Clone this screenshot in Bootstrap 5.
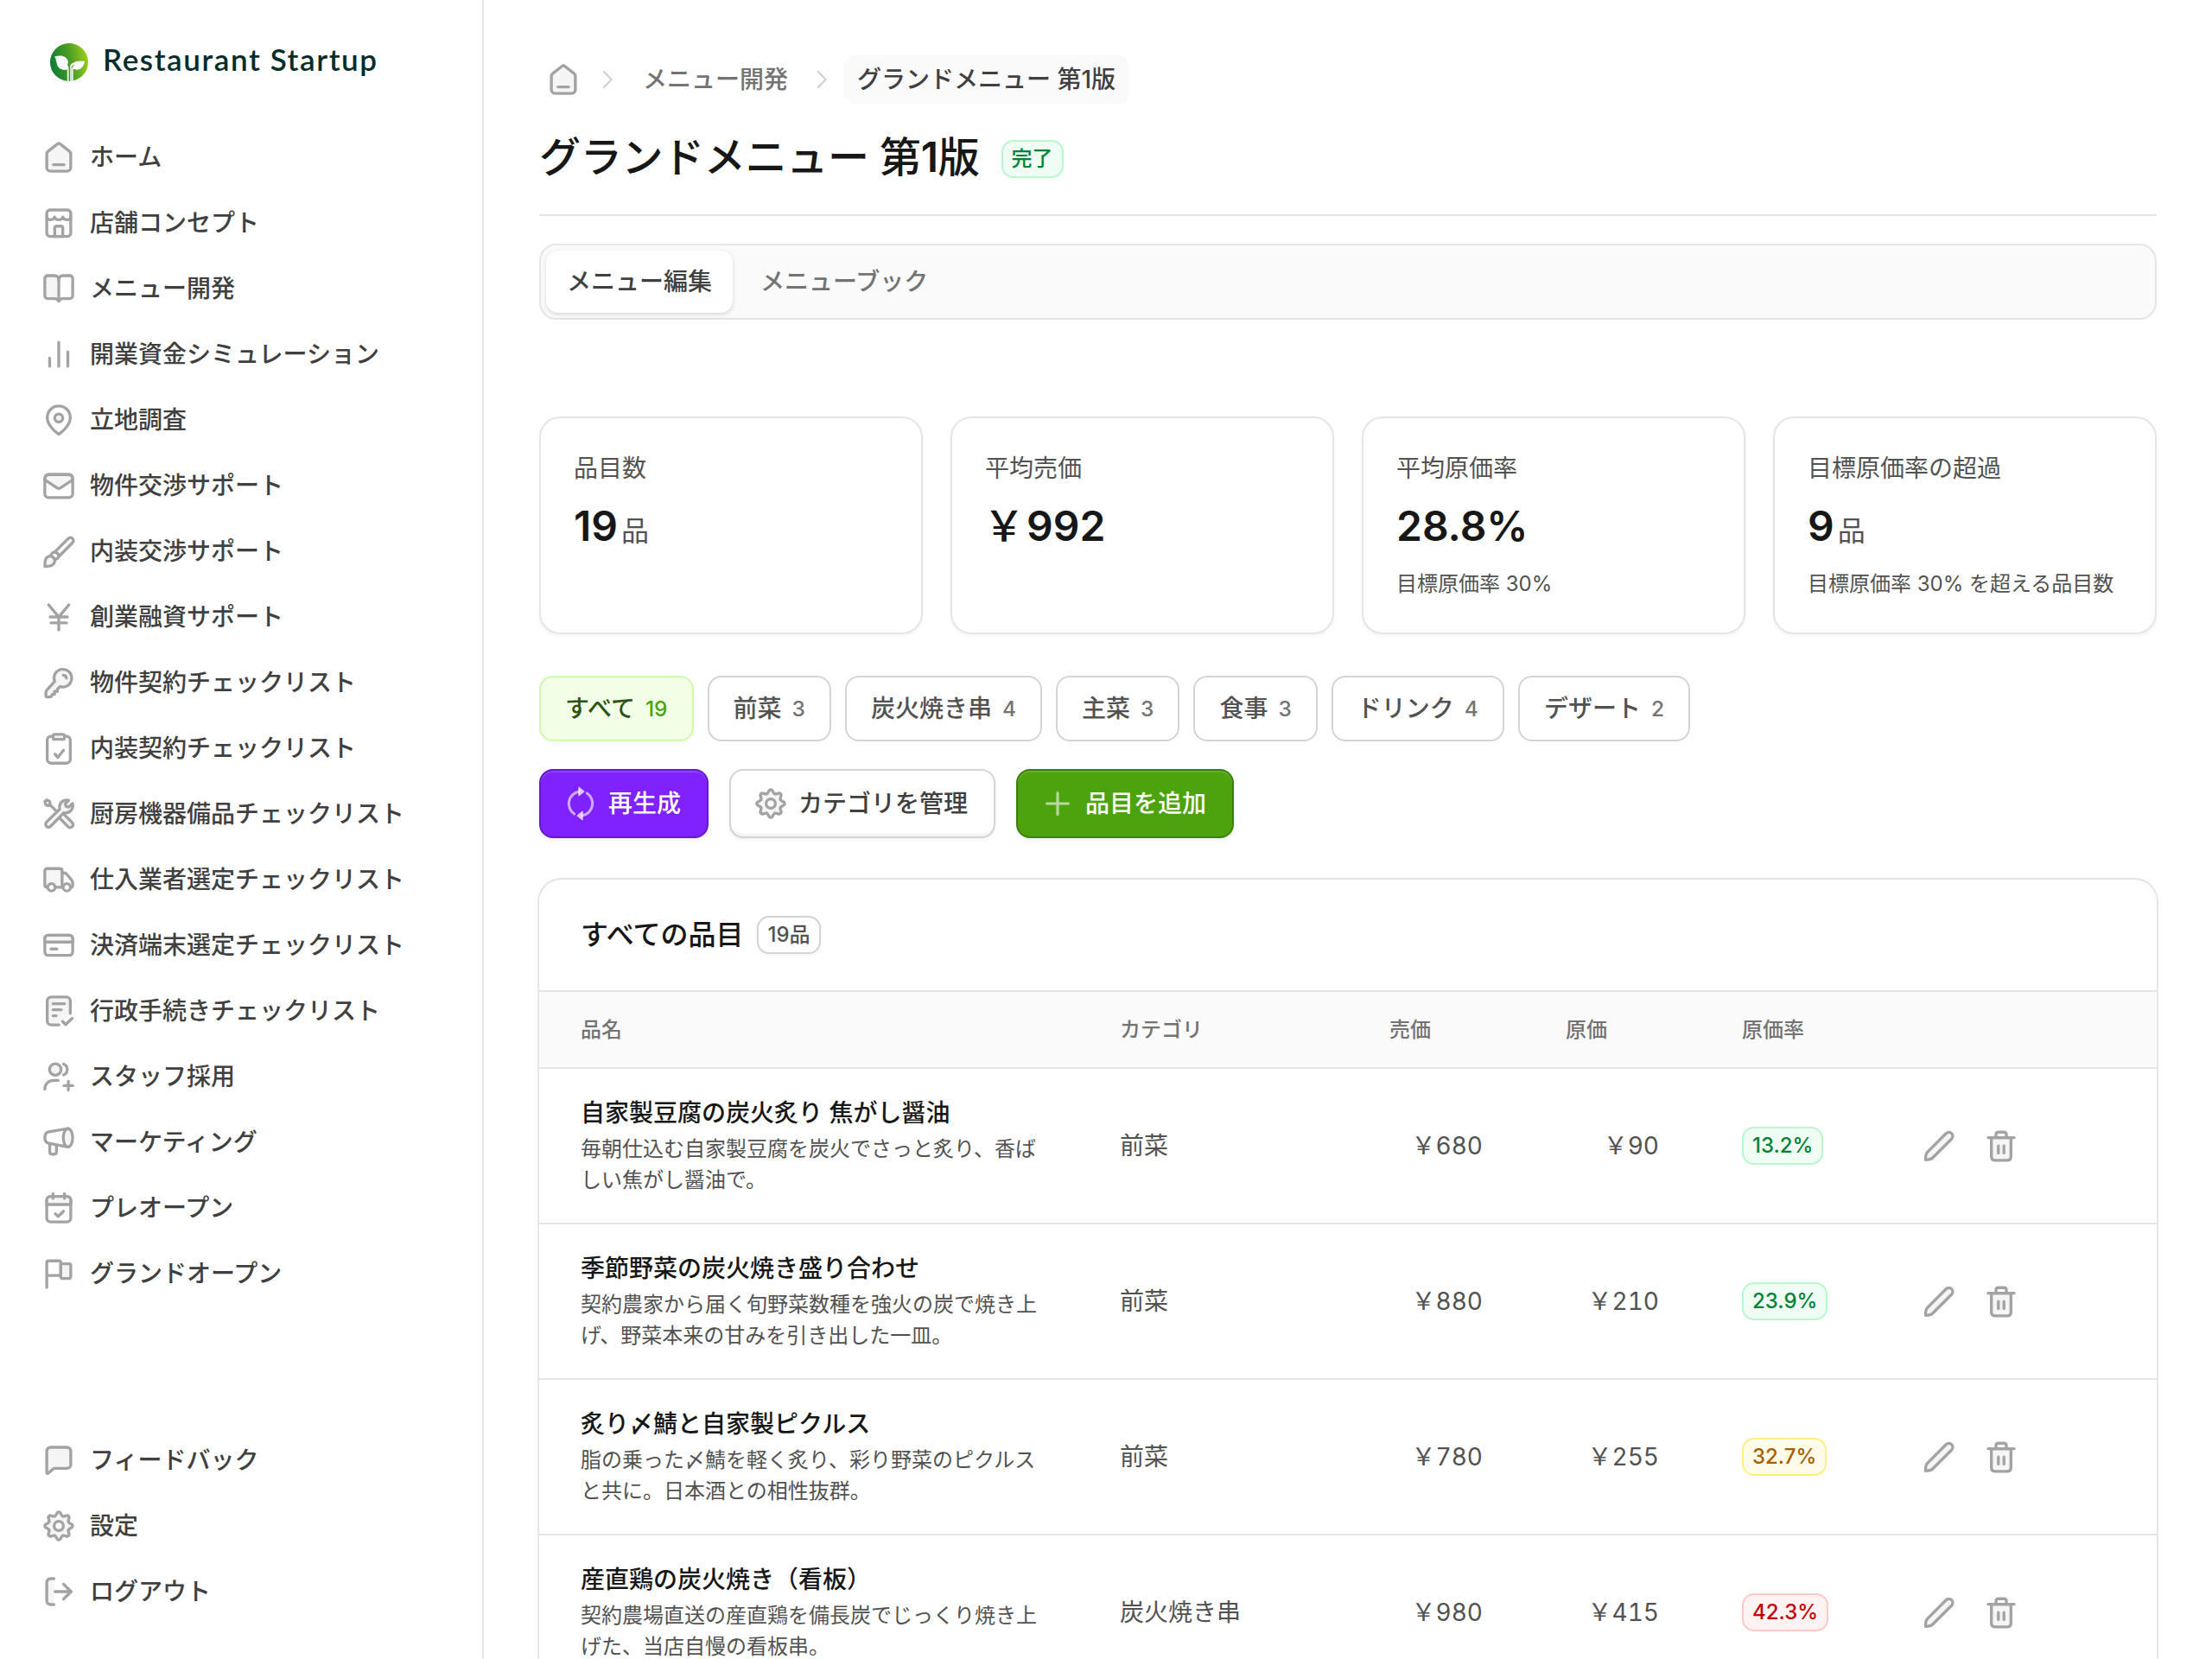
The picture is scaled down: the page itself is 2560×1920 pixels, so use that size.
<!DOCTYPE html>
<html lang="ja">
<head>
<meta charset="utf-8">
<meta name="viewport" content="width=device-width, initial-scale=1">
<title>グランドメニュー 第1版 | Restaurant Startup</title>
<link href="https://cdn.jsdelivr.net/npm/bootstrap@5.3.0/dist/css/bootstrap.min.css" rel="stylesheet">
<style>
:root{--n50:#fafafa;--n200:#e5e5e5;--n300:#d4d4d4;--n400:#a3a3a3;--n500:#737373;--n600:#525252;--n700:#404040;--n900:#171717}
body{font-family:Inter,"Noto Sans CJK JP",sans-serif;font-size:28px;line-height:40px;color:var(--n700);background:#fff;overflow:hidden}
.app{height:1920px;width:2560px}
.ico{width:40px;height:40px;flex:none;display:block;color:var(--n400);--tint:#f5f5f5;fill:none;stroke:currentColor;stroke-width:1.5;stroke-linecap:round;stroke-linejoin:round}
.side{width:560px;border-right:2px solid var(--n200);padding:38px 32px 40px}
.brand{padding-left:26px;gap:17px;height:68px;margin-bottom:38px}
.brand-name{font-family:Lato,"Noto Sans",sans-serif;font-weight:600;font-size:35px;line-height:40px;letter-spacing:1.6px;color:#032d2b;margin-bottom:8px;white-space:nowrap}
.side .nav-link{height:76px;padding:0 16px;gap:16px;color:var(--n700);font-weight:500;white-space:nowrap}
.main-pane{padding:56px 62px 0;min-width:0}
.inner{padding:0 2px}
.crumbs{height:72px}
.crumbs .sep{width:20px;height:28px;margin:0 14px;color:var(--n300)}
.crumb{padding:8px 16px;font-weight:500;color:var(--n500);border-radius:14px;white-space:nowrap}
.crumb.here{background:var(--n50);color:var(--n700)}
.page-title{font-size:48px;line-height:64px;font-weight:500;color:var(--n900);margin:0;letter-spacing:-.3px}
.semi{font-weight:600}
.title-row{height:122px;padding-bottom:12px;gap:25px;border-bottom:2px solid var(--n200)}
.title-row .pill{margin-top:3px}
.pill{display:inline-flex;align-items:center;height:44px;padding:0 10px;border:2px solid;border-radius:14px;font-size:24px;line-height:32px;font-weight:500;white-space:nowrap}
.pill-green{color:#008236;background:#f0fdf4;border-color:#b9f8cf}
.pill-yellow{color:#a65f00;background:#fefce8;border-color:#fff085}
.pill-red{color:#c10007;background:#fef2f2;border-color:#ffc9c9}
.pill-plain{color:var(--n600);background:#fff;border-color:var(--n300);box-shadow:0 2px 4px rgba(0,0,0,.05)}
.tabs{margin-top:32px;height:88px;border:2px solid var(--n200);border-radius:20px;background:var(--n50);padding:6px;gap:8px}
.tabs .nav-link{height:72px;padding:0 24px;border-radius:14px;color:var(--n500);font-weight:500;display:flex;align-items:center}
.tabs .nav-link.active{background:#fff;color:var(--n700);box-shadow:0 2px 6px rgba(0,0,0,.1),0 2px 4px -2px rgba(0,0,0,.1)}
.stats{margin-top:112px;gap:32px}
.stat{flex:1 1 0;height:252px;border:2px solid var(--n200);border-radius:24px;padding:38px;box-shadow:0 2px 4px rgba(0,0,0,.05);color:var(--n600)}
.stat-val{font-size:48px;line-height:64px;height:64px;font-weight:600;color:var(--n900);margin-top:15px}
.stat-val .unit{font-size:32px;line-height:40px;font-weight:400;color:var(--n600);margin-left:4px}
.stat-val .cur{font-weight:500;margin-left:-2px;margin-right:2px}
.stat-hint{font-size:24px;line-height:32px;margin-top:19px;white-space:nowrap}
.chips{margin-top:48px;gap:16px}
.chip{height:76px;padding:0 28px;border:2px solid var(--n300);border-radius:16px;background:#fff;color:var(--n600);font-size:28px;font-weight:500;gap:12px;display:flex;align-items:center;white-space:nowrap}
.chip span{font-size:24.5px;color:var(--n500)}
.chip.on{background:#f3fee7;border-color:#d0f8ab;color:#2b5314}
.chip.on span{color:#4ca30d}
.actions{margin-top:32px;gap:24px}
.act{height:80px;border:2px solid var(--n300);border-radius:16px;padding:0 30px 0 26px;gap:12px;display:flex;align-items:center;font-size:28px;line-height:40px;font-weight:500;white-space:nowrap;background:#fff;color:var(--n700);box-shadow:0 2px 4px rgba(0,0,0,.06),inset 0 -4px 0 -1px #f3f3f3}
.act-violet{background:#7f22fe;border-color:#6519cd;color:#fff;box-shadow:0 2px 4px rgba(0,0,0,.08),inset 0 2px 0 rgba(255,255,255,.14)}
.act-green{background:#4ca30d;border-color:#3b810a;color:#fff;box-shadow:0 2px 4px rgba(0,0,0,.08),inset 0 2px 0 rgba(255,255,255,.14)}
.act-violet .ico,.act-green .ico{color:rgba(255,255,255,.6)}
.panel{margin-top:46px;border:2px solid var(--n200);border-radius:28px 28px 0 0;overflow:hidden}
.panel-head{height:130px;padding:0 48px;gap:16px;border-bottom:2px solid var(--n200)}
.panel-head h2{font-size:32px;line-height:48px;font-weight:500;color:var(--n900);margin:0}
.items{table-layout:fixed;width:1872px;margin:0;--bs-table-bg:transparent}
.items th{height:88px;padding:0 24px;background:var(--n50);font-size:24px;line-height:32px;font-weight:500;color:var(--n500);border-bottom:2px solid var(--n200);vertical-align:middle}
.items td{height:180px;padding:0 24px;border-bottom:2px solid var(--n200);color:var(--n600);vertical-align:middle}
.items th:first-child,.items td:first-child{padding-left:48px}
.dish{font-weight:500;color:var(--n900);line-height:40px;margin-bottom:4px;white-space:nowrap}
.desc{font-size:24px;line-height:36px;width:536px}
.yen{width:108px;text-align:right;font-variant-numeric:tabular-nums;white-space:nowrap}
.rowacts{gap:32px}
</style>
</head>
<body>
<svg width="0" height="0" class="position-absolute" aria-hidden="true">
<defs>
<linearGradient id="leafgrad" x1="0" y1=".6" x2="1" y2=".4"><stop offset="0" stop-color="#0c7a35"/><stop offset=".55" stop-color="#4c9f24"/><stop offset="1" stop-color="#9fce1c"/></linearGradient>
<g id="tooth"><path d="M-2.1-5.08C-.9-5.58-1.3-7.25 0-7.25S.9-5.58 2.1-5.08"/></g>
</defs>
<symbol id="i-home" viewBox="0 0 18 18"><path fill="var(--tint)" d="M2.75 7.4c0-.65.3-1.2.8-1.6L8.4 2a1 1 0 0 1 1.2 0l4.85 3.8c.5.4.8.95.8 1.6v6.85a2 2 0 0 1-2 2h-8.5a2 2 0 0 1-2-2z"/><path d="M6.25 12.9h5.5"/></symbol>
<symbol id="i-store" viewBox="0 0 18 18"><rect x="2.75" y="2.25" width="12.5" height="13.75" rx="1.75"/><path d="M2.75 6.2c.2.8.85 1.2 1.7 1.2 1.2 0 2.2-.5 2.4-1.5.2 1 1.1 1.5 2.15 1.5s1.95-.5 2.15-1.5c.2 1 1.2 1.5 2.4 1.5.85 0 1.5-.4 1.7-1.2"/><path fill="var(--tint)" d="M6.9 16v-4.3a1 1 0 0 1 1-1h2.2a1 1 0 0 1 1 1V16z"/></symbol>
<symbol id="i-book" viewBox="0 0 18 18"><path fill="var(--tint)" d="M9 4.25c0-1.1-1-2-2.25-2h-3.5a1.5 1.5 0 0 0-1.5 1.5v9a1.5 1.5 0 0 0 1.5 1.5H7c.9 0 1.6.4 2 1.25z"/><path d="M9 4.25c0-1.1 1-2 2.25-2h3.5a1.5 1.5 0 0 1 1.5 1.5v9a1.5 1.5 0 0 1-1.5 1.5H11c-.9 0-1.6.4-2 1.25"/></symbol>
<symbol id="i-bars" viewBox="0 0 18 18"><path d="M4.25 11v4.25M9 2.75v12.5M13.75 7.75v7.5"/></symbol>
<symbol id="i-pin" viewBox="0 0 18 18"><path d="M9 16.5C7.6 15.5 3 11.8 3 7.75a6 6 0 0 1 12 0c0 4.05-4.6 7.75-6 8.75z"/><circle cx="9" cy="8" r="2.1" fill="var(--tint)"/></symbol>
<symbol id="i-mail" viewBox="0 0 18 18"><path fill="var(--tint)" d="M1.75 6c0-1.7.5-2.75 2-2.75h10.5c1.5 0 2 1.05 2 2.75L9.9 10.2a2 2 0 0 1-1.8 0z"/><rect x="1.75" y="3.25" width="14.5" height="12" rx="2"/></symbol>
<symbol id="i-brush" viewBox="0 0 18 18"><path fill="var(--tint)" d="M1.75 16.9c.1-1.6-.1-3.3.9-4.5a2.4 2.4 0 0 1 3.7 3.1c-1.2 1.5-3 1.3-4.6 1.4z"/><path d="M4.9 11.5c.2-1.2.9-2 2-2.1 1.3.4 2.1 1.2 2.1 2.2-.3 1-1.100 1.600-2.100 1.700"/><path d="M6.900 9.400 13.900 2.400a1.500 1.500 0 0 1 2.300 2.100L9.200 11.600"/></symbol>
<symbol id="i-yen" viewBox="0 0 18 18"><path d="M3.75 2.75 9 9l5.25-6.25M9 9v6.75M4.5 9h9M5 12.1h8"/></symbol>
<symbol id="i-key" viewBox="0 0 18 18"><path fill="var(--tint)" d="M6.85 8.35a4.6 4.6 0 1 1 2.9 2.7L8.3 12.4v1.2H6.8v1.5H5.6l-.4 1c-.1.3-.4.4-.7.4H3.1a.8.8 0 0 1-.8-.8v-1.600c0-.5.200-.9.500-1.200z"/><path d="M11.400 5.100c.8.100 1.500.7 1.600 1.600"/></symbol>
<symbol id="i-clip" viewBox="0 0 18 18"><rect x="3" y="2.75" width="12" height="14" rx="2"/><rect x="6" y="1.75" width="6" height="2.6" rx="1" fill="var(--tint)"/><path d="m7 12 1.500 1.750L11.500 10"/></symbol>
<symbol id="i-tools" viewBox="0 0 18 18"><path d="M1.75 2.5 2.7 1.75l1.5.6.3 1.5-1 .9-1.200-.5zM4.300 4.100 7.600 7.400"/><path fill="var(--tint)" d="m9.300 11 4.500 4.600a1.500 1.500 0 0 0 2.200-2.100l-4.200-4.200"/><path fill="var(--tint)" d="M14.200 1.900c-2.500-.7-5 1.100-4.800 3.900l.1.700-6.900 6.700a1.500 1.500 0 0 0 2.200 2.200l6.800-7c3 .6 5.300-1.900 4.600-4.900l-2 1.900-1.400-.3-.4-1.400z"/></symbol>
<symbol id="i-truck" viewBox="0 0 18 18"><path fill="var(--tint)" d="M3 13c-.8 0-1.25-.5-1.25-1.25V4.5c0-.8.45-1.25 1.25-1.25h6.5c.8 0 1.25.45 1.25 1.25V13z"/><path d="M10.75 5.5h.9c.6 0 1.100.2 1.500.7l2.600 3.100c.3.400.5.800.5 1.300v1.600c0 .5-.3.800-.8.800H10.750"/><circle cx="5.200" cy="13" r="1.900" fill="#fff"/><circle cx="13.200" cy="13" r="1.900" fill="#fff"/></symbol>
<symbol id="i-card" viewBox="0 0 18 18"><rect x="1.75" y="3.75" width="14.5" height="10.5" rx="1.75"/><path fill="var(--tint)" d="M1.75 7.3h14.5V5.5c0-1-.75-1.75-1.75-1.75h-11c-1 0-1.75.75-1.75 1.75z"/><path d="M5 10.9h3"/></symbol>
<symbol id="i-doc" viewBox="0 0 18 18"><path stroke="none" fill="var(--tint)" d="M3 2h12v9l-5 5H3z"/><path d="M9.1 16.25H5a2 2 0 0 1-2-2V3.75a2 2 0 0 1 2-2h8a2 2 0 0 1 2 2v6.5M6 5.25h6M6 8.4h4.3M6 11.5h1.7M11 14.5l1.6 1.6 3.4-3.3"/></symbol>
<symbol id="i-users" viewBox="0 0 18 18"><circle cx="7.2" cy="5.3" r="3" fill="var(--tint)"/><path d="M11.5 2.5a3 3 0 0 1 0 5.6M1.75 15.500c0-2.800 2-4.500 4.800-4.500h2.200M14 11.400v4.600M11.700 13.700h4.600"/></symbol>
<symbol id="i-horn" viewBox="0 0 18 18"><path d="M4.3 9.9V14c0 .8.4 1.2 1.100 1.200h1.300c.8 0 1.100-.4 1.100-1.200v-3.500"/><path d="M13.700 1.900 3.900 3.500C2.500 3.700 1.750 4.900 1.750 6.500s.75 2.800 2.150 3l9.800 1.900"/><ellipse cx="13.800" cy="6.650" rx="2.450" ry="4.750" fill="var(--tint)"/></symbol>
<symbol id="i-cal" viewBox="0 0 18 18"><rect x="2.75" y="3" width="12.5" height="13.25" rx="2"/><path fill="var(--tint)" d="M2.75 7.2h12.5V5c0-1.200-.8-2-2-2h-8.500c-1.200 0-2 .8-2 2zM6 1.500V4M12 1.500V4"/><path d="m7.200 12 1.500 1.400 2.800-2.700"/></symbol>
<symbol id="i-flag" viewBox="0 0 18 18"><path d="M2.75 16.25V3.25c0-.6.3-.9.9-.9h5.500c.6 0 .9.300.9.900v6.700H2.750"/><path fill="var(--tint)" d="M10.050 3.900h4.300c.6 0 .9.300.9.900v5.800c0 .6-.3.900-.9.900h-3.400c-.6 0-.9-.3-.9-.9z"/></symbol>
<symbol id="i-chat" viewBox="0 0 18 18"><path fill="var(--tint)" d="M2.75 4.25a2 2 0 0 1 2-2h8.5a2 2 0 0 1 2 2v7a2 2 0 0 1-2 2H6.4l-2.900 2.500c-.4.300-.75.100-.75-.4z"/></symbol>
<symbol id="i-gear" viewBox="0 0 18 18"><g transform="translate(9 9)"><circle r="5.7" fill="var(--tint)" stroke="none"/><g fill="var(--tint)"><use href="#tooth"/><use href="#tooth" transform="rotate(45)"/><use href="#tooth" transform="rotate(90)"/><use href="#tooth" transform="rotate(135)"/><use href="#tooth" transform="rotate(180)"/><use href="#tooth" transform="rotate(225)"/><use href="#tooth" transform="rotate(270)"/><use href="#tooth" transform="rotate(315)"/></g><circle r="2.4" fill="#fff"/></g></symbol>
<symbol id="i-out" viewBox="0 0 18 18"><path stroke="none" fill="var(--tint)" d="M2.75 2.25H6.5v13.5H2.75z"/><path d="M6.5 15.75H4.75a2 2 0 0 1-2-2V4.25a2 2 0 0 1 2-2H6.5M7 9h8.5M11.500 5.100 15.400 9l-3.900 3.900"/></symbol>
<symbol id="i-sync" viewBox="0 0 18 18"><path stroke-width="1.4" d="M8.500 2.700a6.400 6.400 0 0 0-2.800 11.700M9.500 15.300a6.400 6.400 0 0 0 2.800-11.700"/><path fill="currentColor" stroke-width=".8" d="M8.100.7v4L10.600 2.700zM9.900 13.300v4L7.400 15.300z"/></symbol>
<symbol id="i-plus" viewBox="0 0 18 18"><path stroke-width="1.4" d="M9 3.400v11.200M3.400 9h11.200"/></symbol>
<symbol id="i-chev" viewBox="0 0 10 14"><path stroke-width="1.25" d="M2.500 2.500 6.800 7l-4.300 4.500"/></symbol>
<symbol id="i-pencil" viewBox="0 0 18 18"><path fill="var(--tint)" d="M2 16.300c0-1.500.100-3.100.9-3.900L12.700 2.600a1.900 1.900 0 0 1 2.900 2.800L5.700 15.300c-.9.900-2.200 1-3.700 1z"/></symbol>
<symbol id="i-trash" viewBox="0 0 18 18"><path fill="var(--tint)" d="M3.900 4.800h10.200v9.700c0 1.300-.7 2.100-2 2.100H5.900c-1.300 0-2-.8-2-2.100z"/><path d="M2.250 4.800h13.500M6.300 4.800V3.200c0-.8.500-1.300 1.300-1.300h2.800c.8 0 1.300.5 1.300 1.300v1.600M7.550 9.100v3.700M10.450 9.100v3.700"/></symbol>
</svg>

<div class="app d-flex overflow-hidden">
  <aside class="side d-flex flex-column flex-shrink-0">
    <a class="brand d-flex align-items-center text-decoration-none" href="#">
      <svg width="44" height="44" viewBox="0 0 44 44"><circle cx="22" cy="22" r="22" fill="url(#leafgrad)"/><path fill="#fff" d="M5 15.500c5-1.500 9-1.300 12 .4 3.500 2 4.200 5 3.600 8.600l-1.800-1.800c1 1.800 2.500 3.500 2.700 6V44h-1.700V30.500c-4.800 1.200-8.800-.3-11-4C7.200 23.700 7.500 18 5 15.500zM40 21c-1.200 5.500-3.600 8.900-7.500 9.600-2.500.4-4.300 0-5.800-1V44h-1.500V29c.6-2 2-3.400 4.200-4.600-2.200.4-3.600 1.500-4.700 2.800V44h-1.500V26c2-4 7.500-6 16.800-5z"/></svg>
      <span class="brand-name">Restaurant Startup</span>
    </a>
    <nav class="nav flex-column flex-nowrap">
      <a class="nav-link d-flex align-items-center" href="#"><svg class="ico"><use href="#i-home"/></svg>ホーム</a>
      <a class="nav-link d-flex align-items-center" href="#"><svg class="ico"><use href="#i-store"/></svg>店舗コンセプト</a>
      <a class="nav-link d-flex align-items-center" href="#"><svg class="ico"><use href="#i-book"/></svg>メニュー開発</a>
      <a class="nav-link d-flex align-items-center" href="#"><svg class="ico"><use href="#i-bars"/></svg>開業資金シミュレーション</a>
      <a class="nav-link d-flex align-items-center" href="#"><svg class="ico"><use href="#i-pin"/></svg>立地調査</a>
      <a class="nav-link d-flex align-items-center" href="#"><svg class="ico"><use href="#i-mail"/></svg>物件交渉サポート</a>
      <a class="nav-link d-flex align-items-center" href="#"><svg class="ico"><use href="#i-brush"/></svg>内装交渉サポート</a>
      <a class="nav-link d-flex align-items-center" href="#"><svg class="ico"><use href="#i-yen"/></svg>創業融資サポート</a>
      <a class="nav-link d-flex align-items-center" href="#"><svg class="ico"><use href="#i-key"/></svg>物件契約チェックリスト</a>
      <a class="nav-link d-flex align-items-center" href="#"><svg class="ico"><use href="#i-clip"/></svg>内装契約チェックリスト</a>
      <a class="nav-link d-flex align-items-center" href="#"><svg class="ico"><use href="#i-tools"/></svg>厨房機器備品チェックリスト</a>
      <a class="nav-link d-flex align-items-center" href="#"><svg class="ico"><use href="#i-truck"/></svg>仕入業者選定チェックリスト</a>
      <a class="nav-link d-flex align-items-center" href="#"><svg class="ico"><use href="#i-card"/></svg>決済端末選定チェックリスト</a>
      <a class="nav-link d-flex align-items-center" href="#"><svg class="ico"><use href="#i-doc"/></svg>行政手続きチェックリスト</a>
      <a class="nav-link d-flex align-items-center" href="#"><svg class="ico"><use href="#i-users"/></svg>スタッフ採用</a>
      <a class="nav-link d-flex align-items-center" href="#"><svg class="ico"><use href="#i-horn"/></svg>マーケティング</a>
      <a class="nav-link d-flex align-items-center" href="#"><svg class="ico"><use href="#i-cal"/></svg>プレオープン</a>
      <a class="nav-link d-flex align-items-center" href="#"><svg class="ico"><use href="#i-flag"/></svg>グランドオープン</a>
    </nav>
    <nav class="nav flex-column flex-nowrap mt-auto">
      <a class="nav-link d-flex align-items-center" href="#"><svg class="ico"><use href="#i-chat"/></svg>フィードバック</a>
      <a class="nav-link d-flex align-items-center" href="#"><svg class="ico"><use href="#i-gear"/></svg>設定</a>
      <a class="nav-link d-flex align-items-center" href="#"><svg class="ico"><use href="#i-out"/></svg>ログアウト</a>
    </nav>
  </aside>

  <main class="main-pane flex-grow-1">
    <div class="inner">
      <div class="crumbs d-flex align-items-center">
        <svg class="ico mx-2"><use href="#i-home"/></svg>
        <svg class="ico sep"><use href="#i-chev"/></svg>
        <span class="crumb">メニュー開発</span>
        <svg class="ico sep"><use href="#i-chev"/></svg>
        <span class="crumb here">グランドメニュー 第1版</span>
      </div>
      <div class="title-row d-flex align-items-center">
        <h1 class="page-title">グランドメニュー 第<span class="semi">1</span>版</h1>
        <span class="pill pill-green">完了</span>
      </div>
      <div class="tabs nav flex-nowrap">
        <a class="nav-link active" href="#">メニュー編集</a>
        <a class="nav-link" href="#">メニューブック</a>
      </div>

      <div class="stats d-flex">
        <div class="stat"><div>品目数</div><div class="stat-val">19<span class="unit">品</span></div></div>
        <div class="stat"><div>平均売価</div><div class="stat-val"><span class="cur">￥</span>992</div></div>
        <div class="stat"><div>平均原価率</div><div class="stat-val">28.8%</div><div class="stat-hint">目標原価率 30%</div></div>
        <div class="stat"><div>目標原価率の超過</div><div class="stat-val">9<span class="unit">品</span></div><div class="stat-hint">目標原価率 30% を超える品目数</div></div>
      </div>

      <div class="chips d-flex">
        <button class="chip on">すべて<span>19</span></button>
        <button class="chip">前菜<span>3</span></button>
        <button class="chip">炭火焼き串<span>4</span></button>
        <button class="chip">主菜<span>3</span></button>
        <button class="chip">食事<span>3</span></button>
        <button class="chip">ドリンク<span>4</span></button>
        <button class="chip">デザート<span>2</span></button>
      </div>
      <div class="actions d-flex">
        <button class="act act-violet"><svg class="ico"><use href="#i-sync"/></svg>再生成</button>
        <button class="act"><svg class="ico"><use href="#i-gear"/></svg>カテゴリを管理</button>
        <button class="act act-green"><svg class="ico"><use href="#i-plus"/></svg>品目を追加</button>
      </div>
    </div>

    <section class="panel">
      <div class="panel-head d-flex align-items-center">
        <h2>すべての品目</h2><span class="pill pill-plain">19品</span>
      </div>
      <table class="table items">
        <colgroup><col style="width:648px"><col style="width:312px"><col style="width:204px"><col style="width:204px"><col style="width:208px"><col></colgroup>
        <thead><tr><th>品名</th><th>カテゴリ</th><th>売価</th><th>原価</th><th>原価率</th><th></th></tr></thead>
        <tbody>
          <tr><td><div class="dish">自家製豆腐の炭火炙り 焦がし醤油</div><div class="desc">毎朝仕込む自家製豆腐を炭火でさっと炙り、香ばしい焦がし醤油で。</div></td><td>前菜</td><td><div class="yen">￥680</div></td><td><div class="yen">￥90</div></td><td><span class="pill pill-green">13.2%</span></td><td><div class="d-flex rowacts"><svg class="ico"><use href="#i-pencil"/></svg><svg class="ico"><use href="#i-trash"/></svg></div></td></tr>
          <tr><td><div class="dish">季節野菜の炭火焼き盛り合わせ</div><div class="desc">契約農家から届く旬野菜数種を強火の炭で焼き上げ、野菜本来の甘みを引き出した一皿。</div></td><td>前菜</td><td><div class="yen">￥880</div></td><td><div class="yen">￥210</div></td><td><span class="pill pill-green">23.9%</span></td><td><div class="d-flex rowacts"><svg class="ico"><use href="#i-pencil"/></svg><svg class="ico"><use href="#i-trash"/></svg></div></td></tr>
          <tr><td><div class="dish">炙り〆鯖と自家製ピクルス</div><div class="desc">脂の乗った〆鯖を軽く炙り、彩り野菜のピクルスと共に。日本酒との相性抜群。</div></td><td>前菜</td><td><div class="yen">￥780</div></td><td><div class="yen">￥255</div></td><td><span class="pill pill-yellow">32.7%</span></td><td><div class="d-flex rowacts"><svg class="ico"><use href="#i-pencil"/></svg><svg class="ico"><use href="#i-trash"/></svg></div></td></tr>
          <tr><td><div class="dish">産直鶏の炭火焼き（看板）</div><div class="desc">契約農場直送の産直鶏を備長炭でじっくり焼き上げた、当店自慢の看板串。</div></td><td>炭火焼き串</td><td><div class="yen">￥980</div></td><td><div class="yen">￥415</div></td><td><span class="pill pill-red">42.3%</span></td><td><div class="d-flex rowacts"><svg class="ico"><use href="#i-pencil"/></svg><svg class="ico"><use href="#i-trash"/></svg></div></td></tr>
        </tbody>
      </table>
    </section>
  </main>
</div>
<script src="https://cdn.jsdelivr.net/npm/bootstrap@5.3.0/dist/js/bootstrap.bundle.min.js"></script>
</body>
</html>
